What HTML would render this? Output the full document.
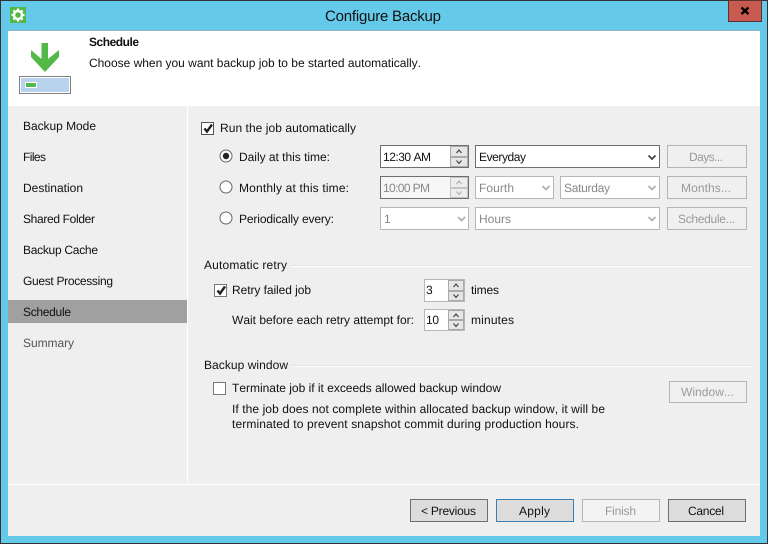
<!DOCTYPE html>
<html><head><meta charset="utf-8"><style>
html,body{margin:0;padding:0;background:#65c9ea;width:768px;height:544px;overflow:hidden}
svg{display:block}
text{font-family:"Liberation Sans",sans-serif;font-size:12px;fill:#111;text-rendering:geometricPrecision;font-kerning:none}
.d{fill:#9a9a9a}
.g{fill:#555}
.box{fill:#fff;stroke:#b4b8b8}
.act{fill:#fff;stroke:#6e6e6e}
.btn{fill:#dcdcdc;stroke:#707070}
.dis{fill:#f3f3f3;stroke:#b4b4b4}
.chev{fill:none;stroke:#444;stroke-width:1.8}
.chevd{fill:none;stroke:#b0b0b0;stroke-width:1.8}
</style></head><body>
<svg width="768" height="544" viewBox="0 0 768 544" xmlns="http://www.w3.org/2000/svg">
<rect width="768" height="544" fill="#65c9ea"/>
<rect x="0.5" y="0.5" width="767" height="543" fill="none" stroke="#333"/>
<rect x="8" y="30" width="752" height="1" fill="#8fb6c4"/>
<rect x="8" y="31" width="752" height="505" fill="#efefef"/>
<rect x="8" y="31" width="752" height="75" fill="#fff"/>
<rect x="187" y="106" width="1" height="378" fill="#fff"/>
<rect x="8" y="484" width="752" height="1" fill="#fff"/>

<!-- close -->
<rect x="728.500" y="0.500" width="33" height="21" fill="#c75b50" stroke="#5a3330"/>
<path d="M741.500 7.500l7 6.500M748.500 7.500l-7 6.500" stroke="#000" stroke-width="2.400" fill="none"/>

<!-- app icon -->
<rect x="10" y="7" width="16" height="16" fill="#52b848"/>
<circle cx="18" cy="15" r="4" fill="none" stroke="#fff" stroke-width="2.400"/>
<path d="M18 8.500v3M18 18.500v3M11.500 15h3M21.500 15h3M13.400 10.400l2.100 2.100M20.500 17.500l2.100 2.100M22.600 10.400l-2.100 2.100M15.500 17.500l-2.100 2.100" stroke="#fff" stroke-width="2.200" fill="none"/>

<text x="325" y="21" style="font-size:15px" textLength="116">Configure Backup</text>

<!-- header icon -->
<path d="M41.500 43h6.500v16l11-9v7L45 72 31 57v-7l10.500 9z" fill="#52b848"/>
<rect x="19.500" y="76.500" width="51" height="17" fill="#b9d3ee" stroke="#808080"/>
<rect x="20.500" y="77.500" width="49" height="15" fill="none" stroke="#fff"/>
<rect x="25.500" y="82.500" width="11" height="5" fill="#52b848" stroke="#fff"/>

<text x="89" y="46" textLength="50" style="font-weight:bold">Schedule</text>
<text x="89" y="67" textLength="332">Choose when you want backup job to be started automatically.</text>

<!-- sidebar -->
<rect x="8" y="300" width="179" height="23" fill="#a0a0a0"/>
<text x="23" y="130" textLength="73">Backup Mode</text>
<text x="23" y="161" textLength="23">Files</text>
<text x="23" y="192" textLength="60">Destination</text>
<text x="23" y="223" textLength="72">Shared Folder</text>
<text x="23" y="254" textLength="75">Backup Cache</text>
<text x="23" y="285" textLength="90">Guest Processing</text>
<text x="23" y="316" textLength="48">Schedule</text>
<text x="23" y="347" textLength="51" class="g">Summary</text>

<!-- run checkbox -->
<rect x="201.500" y="122.500" width="12" height="12" fill="#fff" stroke="#555"/>
<path d="M204.500 128.500l2.500 3 5-7" fill="none" stroke="#222" stroke-width="2.400"/>
<text x="220" y="132" textLength="136">Run the job automatically</text>

<!-- radios -->
<circle cx="226" cy="156" r="6" fill="#fff" stroke="#666"/><circle cx="226" cy="156" r="3.200" fill="#222"/>
<circle cx="226" cy="187" r="6" fill="#fff" stroke="#666"/>
<circle cx="226" cy="218" r="6" fill="#fff" stroke="#666"/>
<text x="239" y="161" textLength="91">Daily at this time:</text>
<text x="239" y="192" textLength="110">Monthly at this time:</text>
<text x="239" y="223" textLength="95">Periodically every:</text>

<!-- time 1 -->
<rect x="380.500" y="145.500" width="88" height="22" class="act"/>
<text x="383" y="161" textLength="48">12:30 AM</text>
<rect x="450.500" y="146.500" width="17" height="10" fill="#e6e6e6" stroke="#aaa"/>
<rect x="450.500" y="157.500" width="17" height="9" fill="#e6e6e6" stroke="#aaa"/>
<path d="M456.500 153l2.500-3 2.500 3M456.500 160.500l2.500 3 2.500-3" class="chev" style="stroke-width:1.200"/>
<!-- time 2 -->
<rect x="380.500" y="176.500" width="88" height="22" fill="#f6f6f6" stroke="#6e6e6e"/>
<text x="383" y="192" textLength="47" style="fill:#888">10:00 PM</text>
<rect x="450.500" y="177.500" width="17" height="10" fill="#eee" stroke="#c4c4c4"/>
<rect x="450.500" y="188.500" width="17" height="9" fill="#eee" stroke="#c4c4c4"/>
<path d="M456.500 184l2.500-3 2.500 3M456.500 191.500l2.500 3 2.500-3" class="chevd" style="stroke-width:1.200"/>
<!-- combo 1 -->
<rect x="380.500" y="207.500" width="88" height="22" class="box"/>
<text x="384" y="223" style="fill:#888">1</text>
<path d="M458 217l3.500 3.500 3.500-3.500" class="chevd"/>

<rect x="475.500" y="145.500" width="184" height="22" class="act"/>
<text x="479" y="161" textLength="47">Everyday</text>
<path d="M648.500 155.500l3.500 3.500 3.500-3.500" class="chev"/>

<rect x="475.500" y="176.500" width="78" height="22" class="box"/>
<text x="479" y="192" textLength="35" style="fill:#888">Fourth</text>
<path d="M542.500 186l3.500 3.500 3.500-3.500" class="chevd"/>
<rect x="560.500" y="176.500" width="99" height="22" class="box"/>
<text x="564" y="192" textLength="46" style="fill:#888">Saturday</text>
<path d="M648.500 186l3.500 3.500 3.500-3.500" class="chevd"/>
<rect x="475.500" y="207.500" width="184" height="22" class="box"/>
<text x="479" y="223" textLength="32" style="fill:#888">Hours</text>
<path d="M648.500 217l3.500 3.500 3.500-3.500" class="chevd"/>

<!-- right buttons -->
<rect x="667.500" y="145.500" width="79" height="22" fill="#f0f0f0" stroke="#b4b4b4"/>
<text x="689" y="161" textLength="34" class="d">Days...</text>
<rect x="667.500" y="176.500" width="79" height="22" fill="#f0f0f0" stroke="#b4b4b4"/>
<text x="681" y="192" textLength="50" class="d">Months...</text>
<rect x="667.500" y="207.500" width="79" height="22" fill="#f0f0f0" stroke="#b4b4b4"/>
<text x="678" y="223" textLength="57" class="d">Schedule...</text>

<!-- retry -->
<text x="204" y="269" textLength="83">Automatic retry</text>
<rect x="291" y="265" width="460" height="1" fill="#dfe4ea"/>
<rect x="291" y="266" width="460" height="1" fill="#fff"/>
<rect x="214.500" y="284.500" width="12" height="12" fill="#fff" stroke="#777"/>
<path d="M217.500 290.500l2.500 3 5-7" fill="none" stroke="#222" stroke-width="2.400"/>
<text x="232" y="294" textLength="79">Retry failed job</text>
<text x="232" y="324" textLength="182">Wait before each retry attempt for:</text>

<rect x="424.500" y="279.500" width="40" height="22" fill="#fff" stroke="#b4b8b8"/>
<text x="426" y="294">3</text>
<rect x="448.500" y="280.500" width="15" height="10" fill="#e6e6e6" stroke="#aaa"/>
<rect x="448.500" y="291.500" width="15" height="9" fill="#e6e6e6" stroke="#aaa"/>
<path d="M453.500 287l2.500-3 2.500 3M453.500 294.500l2.500 3 2.500-3" class="chev" style="stroke-width:1.200"/>
<text x="471" y="294" textLength="28">times</text>

<rect x="424.500" y="309.500" width="40" height="21" fill="#fff" stroke="#b4b8b8"/>
<text x="426" y="324" textLength="13">10</text>
<rect x="448.500" y="310.500" width="15" height="9" fill="#e6e6e6" stroke="#aaa"/>
<rect x="448.500" y="320.500" width="15" height="9" fill="#e6e6e6" stroke="#aaa"/>
<path d="M453.500 317l2.500-3 2.500 3M453.500 323.500l2.500 3 2.500-3" class="chev" style="stroke-width:1.200"/>
<text x="471" y="324" textLength="43">minutes</text>

<!-- backup window -->
<text x="204" y="369" textLength="84">Backup window</text>
<rect x="292" y="365" width="459" height="1" fill="#dfe4ea"/>
<rect x="292" y="366" width="459" height="1" fill="#fff"/>
<rect x="213.500" y="382.500" width="12" height="12" fill="#fff" stroke="#777"/>
<text x="232" y="392" textLength="269">Terminate job if it exceeds allowed backup window</text>
<text x="232" y="413" textLength="373">If the job does not complete within allocated backup window, it will be</text>
<text x="232" y="428" textLength="347">terminated to prevent snapshot commit during production hours.</text>
<rect x="669.500" y="381.500" width="77" height="21" fill="#f0f0f0" stroke="#b4b4b4"/>
<text x="681" y="396" textLength="53" class="d">Window...</text>

<!-- footer -->
<rect x="410.500" y="499.500" width="77" height="22" class="btn"/>
<text x="421" y="515" textLength="55">&lt; Previous</text>
<rect x="496.500" y="499.500" width="77" height="22" fill="#dcdcdc" stroke="#3c7fb1"/>
<text x="519" y="515" textLength="31">Apply</text>
<rect x="582.500" y="499.500" width="77" height="22" class="dis"/>
<text x="605" y="515" textLength="31" class="d">Finish</text>
<rect x="668.500" y="499.500" width="77" height="22" class="btn"/>
<text x="688" y="515" textLength="36">Cancel</text>
</svg>
</body></html>
